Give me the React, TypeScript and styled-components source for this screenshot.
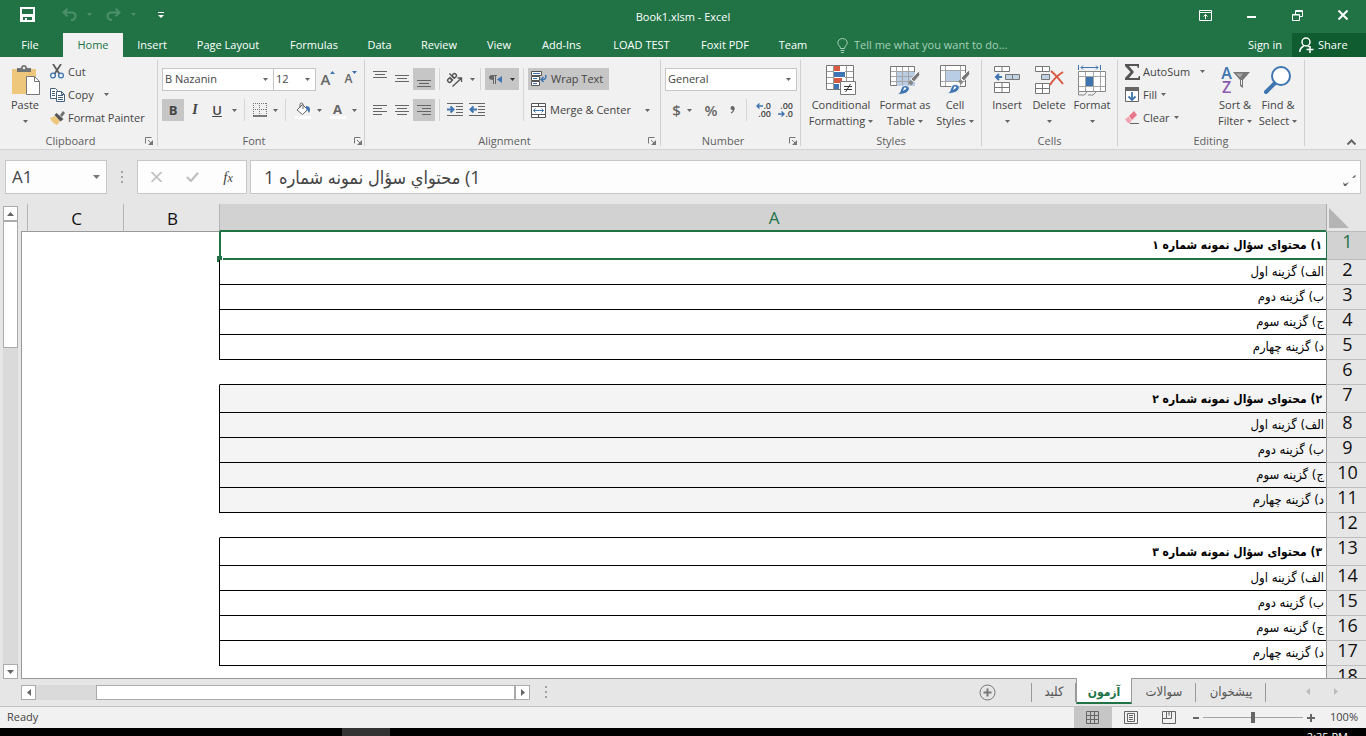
import React from "react";
import styled, { createGlobalStyle, css } from "styled-components";

const green = "#217346";
const darkGreen = "#0e5c2f";
const ink = "#444444";
const iconGrey = "#666666";
const blue = "#3e74b0";
const line = "#d2d2d2";
const uiFont = '"Open Sans", "Noto Sans", "DejaVu Sans", sans-serif';
const arabicFont = '"DejaVu Sans Condensed", "DejaVu Sans", "Noto Sans", sans-serif';

const GlobalStyle = createGlobalStyle`
  *, *::before, *::after { box-sizing: border-box; }
  body { margin: 0; font: 11px/16px ${uiFont}; color: ${ink}; background: #e6e6e6; }
  button, input, select { font: inherit; color: inherit; margin: 0; padding: 0; border: 0; border-radius: 0; background: none; }
  svg { display: block; flex: none; }
`;

const Window = styled.div`
  display: flex;
  flex-direction: column;
  height: 100vh;
  overflow: hidden;
`;

/* ---------- title bar ---------- */

const TitleBar = styled.header`
  display: grid;
  grid-template-columns: 1fr auto 1fr;
  align-items: stretch;
  flex: none;
  height: 33px;
  background: ${green};
  color: #ffffff;
`;

const QuickAccess = styled.div`
  display: flex;
  align-items: center;
  padding: 0 0 4px 18px;
`;

const QuickButton = styled.button<{ $w: number; $before?: number; $dim?: boolean }>`
  display: flex;
  align-items: center;
  justify-content: center;
  gap: 10px;
  width: ${(p) => p.$w}px;
  height: 22px;
  margin-left: ${(p) => p.$before ?? 0}px;
  color: ${(p) => (p.$dim ? "#4d8f6a" : "#ffffff")};
`;

const DocumentTitle = styled.h1`
  margin: 0;
  font-size: 11px;
  line-height: 33px;
  font-weight: 400;
`;

const WindowControls = styled.div`
  display: flex;
  justify-content: flex-end;
`;

const WindowButton = styled.button`
  display: flex;
  align-items: center;
  justify-content: center;
  width: 46px;
  padding-bottom: 3px;
  color: #ffffff;
`;

/* ---------- ribbon tabs ---------- */

const TabRow = styled.nav`
  display: flex;
  flex: none;
  height: 24px;
  background: ${green};
  color: #ffffff;
`;

const RibbonTab = styled.button<{ $w: number; $active?: boolean }>`
  width: ${(p) => p.$w}px;
  white-space: nowrap;
  ${(p) => p.$active && css`background: #f1f1f1; color: ${green};`}
`;

const TellMe = styled.label`
  display: flex;
  align-items: center;
  gap: 6px;
  padding-left: 15px;
  color: #a6d0b8;
`;

const TellMeInput = styled.input`
  width: 170px;
  &::placeholder { color: #a6d0b8; opacity: 1; }
`;

const Account = styled.div`
  display: flex;
  margin-left: auto;
`;

const SignIn = styled.button`
  padding: 0 10px;
`;

const Share = styled.button`
  display: flex;
  align-items: center;
  gap: 4px;
  width: 74px;
  padding-left: 7px;
  background: ${darkGreen};
`;

/* ---------- ribbon ---------- */

const RibbonBar = styled.section`
  display: flex;
  flex: none;
  height: 93px;
  background: #f1f1f1;
  border-bottom: 1px solid ${line};
`;

const GroupBox = styled.div<{ $w: number }>`
  display: grid;
  grid-template-rows: 76px 16px;
  flex: none;
  width: ${(p) => p.$w}px;
  border-right: 1px solid;
  border-image: linear-gradient(to bottom, transparent 4%, #d0d0d0 4%, #d0d0d0 96%, transparent 96%) 1;
`;

const GroupFoot = styled.div`
  display: flex;
  color: #5e5e5e;
`;

const GroupLabel = styled.span`
  flex: 1;
  text-align: center;
`;

const Launcher = styled.button`
  display: flex;
  align-items: center;
  justify-content: center;
  width: 16px;
`;

const LargeArea = styled.div<{ $left?: number }>`
  display: flex;
  align-items: flex-start;
  padding: 6px 0 0 ${(p) => p.$left ?? 4}px;
`;

const LargeButton = styled.button<{ $w: number }>`
  display: flex;
  flex-direction: column;
  align-items: center;
  width: ${(p) => p.$w}px;
  white-space: nowrap;
`;

const LargeIcon = styled.span`
  display: flex;
  align-items: center;
  justify-content: center;
  height: 34px;
`;

const LabelLine = styled.span`
  display: flex;
  align-items: center;
  justify-content: center;
  gap: 3px;
  height: 16px;
`;

const SmallColumn = styled.div<{ $w: number; $before?: number }>`
  display: flex;
  flex-direction: column;
  width: ${(p) => p.$w}px;
  margin: -3px 0 0 ${(p) => p.$before ?? 0}px;
`;

const SmallButton = styled.button`
  display: flex;
  align-items: center;
  gap: 4px;
  height: 23px;
  white-space: nowrap;
`;

const SmallIcon = styled.span`
  display: flex;
  justify-content: center;
  width: 14px;
`;

const FarArrow = styled.span`
  margin-left: 6px;
`;

const ControlArea = styled.div`
  display: flex;
  padding: 11px 4px 0;
`;

const Stack = styled.div`
  display: flex;
  flex-direction: column;
  gap: 9px;
`;

const ControlRow = styled.div`
  display: flex;
  align-items: center;
  height: 22px;
`;

const ToolButton = styled.button<{ $w?: number; $active?: boolean }>`
  display: flex;
  align-items: center;
  justify-content: center;
  gap: 6px;
  flex: none;
  width: ${(p) => p.$w ?? 22}px;
  height: 22px;
  white-space: nowrap;
  ${(p) => p.$active && css`background: #c6c6c6;`}
`;

const WideButton = styled(ToolButton)`
  justify-content: flex-start;
  gap: 4px;
  padding-left: 3px;
`;

const Divider = styled.span<{ $tall?: boolean }>`
  flex: none;
  width: 1px;
  height: ${(p) => (p.$tall ? 53 : 22)}px;
  margin: 0 4px;
  background: #d6d6d6;
`;

const SelectWrap = styled.span<{ $w: number }>`
  position: relative;
  flex: none;
  width: ${(p) => p.$w}px;
  height: 23px;
  background: #ffffff;
  border: 1px solid #c6c6c6;
  & + & { margin-left: -1px; }
  svg { position: absolute; right: 5px; top: 9px; pointer-events: none; }
`;

const Select = styled.select`
  appearance: none;
  width: 100%;
  height: 21px;
  padding-left: 2px;
  outline: 0;
`;

const Glyph = styled.span<{ $kind: "bold" | "italic" | "underline" }>`
  font-size: 13px;
  line-height: 18px;
  ${(p) => p.$kind === "bold" && css`font-weight: 700;`}
  ${(p) => p.$kind === "italic" && css`font: italic 700 14px/18px "Liberation Serif", serif;`}
  ${(p) => p.$kind === "underline" && css`font-weight: 600; text-decoration: underline;`}
`;

const Letter = styled.span<{ $size: number }>`
  font-size: ${(p) => p.$size}px;
  line-height: 20px;
  font-weight: 600;
  color: ${iconGrey};
`;

const LetterButton = styled(ToolButton)`
  gap: 0;
  svg { align-self: flex-start; margin-top: 3px; }
`;

const ColorLetter = styled.span`
  width: 16px;
  height: 17px;
  border-bottom: 3px solid #ffffff;
  font-size: 13px;
  line-height: 14px;
  font-weight: 700;
  color: ${iconGrey};
  text-align: center;
`;

const Decimals = styled.span`
  display: grid;
  grid-template-columns: auto auto;
  justify-content: end;
  align-items: center;
  width: 18px;
  font-size: 9px;
  line-height: 8px;
  font-weight: 600;
  text-align: right;
`;

const WholeLine = styled.span`
  grid-column: 1 / -1;
`;

const RibbonEnd = styled.div`
  display: flex;
  flex: 1;
  align-items: flex-end;
  justify-content: flex-end;
  padding: 0 10px 4px 0;
`;

const SortLetters = styled.span`
  display: flex;
  flex-direction: column;
  width: 12px;
  font-size: 16px;
  line-height: 14px;
  font-weight: 600;
  color: ${blue};
  span + span { color: #8a5bb0; }
`;

/* ---------- formula bar ---------- */

const FormulaRow = styled.section`
  display: flex;
  align-items: flex-start;
  flex: none;
  height: 54px;
  padding: 10px 5px 0;
`;

const FieldBox = styled.div`
  display: flex;
  align-items: center;
  height: 34px;
  background: #fdfdfd;
  border: 1px solid #c8c8c8;
`;

const NameBox = styled(FieldBox)`
  width: 102px;
  padding: 0 6px;
`;

const NameInput = styled.input`
  flex: 1;
  min-width: 0;
  font-size: 17px;
  line-height: 24px;
  outline: 0;
`;

const Grip = styled.span`
  display: flex;
  justify-content: center;
  align-items: center;
  width: 30px;
  height: 34px;
`;

const FormulaButtons = styled(FieldBox)`
  width: 110px;
  margin-right: 3px;
`;

const FormulaButton = styled.button`
  display: flex;
  align-items: center;
  justify-content: center;
  width: 36px;
  height: 32px;
  font: italic 15px/20px "Liberation Serif", serif;
  small { font-size: 12px; }
`;

const FormulaField = styled(FieldBox)`
  flex: 1;
  min-width: 0;
`;

const FormulaInput = styled.input`
  flex: 1;
  min-width: 0;
  padding-left: 13px;
  font: 18px/30px "Open Sans", ${arabicFont};
  text-align: left;
  outline: 0;
`;

const ExpandButton = styled.button`
  display: flex;
  align-items: flex-end;
  width: 17px;
  height: 20px;
`;

/* ---------- sheet ---------- */

const SheetArea = styled.main`
  display: flex;
  flex: 1;
  min-height: 0;
`;

const VerticalScroll = styled.div`
  display: flex;
  flex-direction: column;
  justify-content: space-between;
  flex: none;
  width: 15px;
  margin: 2px 3px 0;
  background: #dadada;
`;

const ScrollButton = styled.button`
  display: flex;
  align-items: center;
  justify-content: center;
  flex: none;
  width: 15px;
  height: 15px;
  background: #ffffff;
  border: 1px solid #ababab;
`;

const VerticalThumb = styled.div`
  height: 127px;
  background: #ffffff;
  border: 1px solid #ababab;
`;

const SheetView = styled.div`
  flex: 1;
  min-width: 0;
  overflow: hidden;
  border-bottom: 1px solid #999999;
`;

const Table = styled.table`
  width: 100%;
  table-layout: fixed;
  border-collapse: separate;
  border-spacing: 0;
  font-family: ${arabicFont};
  color: #000000;
  background: #ffffff;
`;

const HeadCell = styled.th<{ $active?: boolean }>`
  height: 28px;
  padding: 2px 0 0 2px;
  font: 400 17px/24px ${uiFont};
  color: ${(p) => (p.$active ? green : "#111111")};
  background: ${(p) => (p.$active ? "#d2d2d2" : "#e6e6e6")};
  border-bottom: ${(p) => (p.$active ? `2px solid ${green}` : "1px solid #999999")};
  border-left: 1px solid #b5b5b5;
  &:last-child { border-left: 0; }
`;

const CornerCell = styled.th`
  padding: 0 17px 3px 0;
  vertical-align: bottom;
  background: #e6e6e6;
  border-bottom: 1px solid #bbbbbb;
  border-left: 1px solid #ababab;
`;

const RowHead = styled.th<{ $active?: boolean }>`
  padding: 0 0 4px 2px;
  font: 400 18px/19px ${uiFont};
  vertical-align: top;
  color: ${(p) => (p.$active ? green : "#111111")};
  background: ${(p) => (p.$active ? "#d2d2d2" : "#e6e6e6")};
  border-bottom: 1px solid #bdbdbd;
  border-left: 1px solid #999999;
`;

type Kind = "title" | "option" | "blank";

const SheetRow = styled.tr<{ $kind: Kind }>`
  height: ${(p) => (p.$kind === "title" ? 28 : 25)}px;
`;

const MainCell = styled.td<{ $kind: Kind; $shade: boolean; $selected: boolean }>`
  position: relative;
  padding: 0 ${(p) => (p.$kind === "title" ? 4 : 2)}px 0 0;
  font-size: ${(p) => (p.$kind === "title" ? 12 : 13)}px;
  line-height: 20px;
  font-weight: ${(p) => (p.$kind === "title" ? 700 : 400)};
  text-align: right;
  white-space: nowrap;
  background: ${(p) => (p.$shade ? "#f4f4f4" : "#ffffff")};
  border-bottom: 1px solid #000000;
  border-left: 1px solid ${(p) => (p.$kind === "blank" ? "#ffffff" : "#000000")};
  ${(p) => p.$selected && css`
    border-bottom: 2px solid ${green};
    border-left: 2px solid ${green};
    box-shadow: 1px 0 0 ${green};
    &::after {
      content: "";
      position: absolute;
      left: -4px;
      bottom: -4px;
      width: 6px;
      height: 6px;
      background: ${green};
      border: 1px solid #ffffff;
      border-width: 0 1px 0 0;
    }
  `}
`;

const EmptyCell = styled.td`
  padding: 0;
  background: #ffffff;
  &:last-child { border-left: 1px solid #999999; }
`;

/* ---------- sheet tabs ---------- */

const BottomRow = styled.footer`
  display: flex;
  flex: none;
  height: 28px;
  padding-left: 21px;
  border-bottom: 1px solid #c3c3c3;
`;

const HorizontalScroll = styled.div`
  display: flex;
  width: 509px;
  height: 15px;
  margin-top: 6px;
  background: #dadada;
`;

const HorizontalThumb = styled.div`
  flex: 1;
  margin-left: 60px;
  background: #ffffff;
  border: 1px solid #ababab;
`;

const BottomGrip = styled.span`
  display: flex;
  align-items: center;
  width: 32px;
  padding: 0 0 1px 15px;
`;

const SheetTabs = styled.nav`
  display: flex;
  margin-left: auto;
`;

const AddSheet = styled.button`
  display: flex;
  padding: 5px 35px 0 0;
`;

const SheetTab = styled.button<{ $w: number; $active?: boolean }>`
  width: ${(p) => p.$w}px;
  height: 25px;
  font: 13px/20px ${arabicFont};
  color: #555555;
  ${(p) => p.$active
    ? css`
        margin: -1px 0 0;
        height: 26px;
        padding-top: 3px;
        background: #ffffff;
        font-size: 12px;
        font-weight: 700;
        color: ${green};
        border-bottom: 2px solid ${green};
        border-left: 1px solid #999999;
        border-right: 1px solid #999999;
      `
    : css`
        background: linear-gradient(#999999, #999999) right 4px / 1px 19px no-repeat;
        background-position: right 0 top 4px;
      `}
`;

const FirstRule = styled.span`
  width: 1px;
  height: 19px;
  margin-top: 4px;
  background: #999999;
`;

const TabNav = styled.div`
  display: flex;
  padding: 0 16px 3px 28px;
  button { display: flex; align-items: center; justify-content: center; width: 28px; }
`;

/* ---------- status bar ---------- */

const StatusBar = styled.div`
  display: flex;
  align-items: stretch;
  flex: none;
  height: 21px;
  padding: 0 8px 0 7px;
  line-height: 20px;
  background: #f1f1f1;
`;

const ViewButtons = styled.div`
  display: flex;
  margin-left: auto;
`;

const ViewButton = styled.button<{ $active?: boolean }>`
  display: flex;
  align-items: center;
  justify-content: center;
  width: 38px;
  background: ${(p) => (p.$active ? "#c6c6c6" : "transparent")};
`;

const ZoomStep = styled.button`
  display: flex;
  align-items: center;
  justify-content: center;
  width: 15px;
`;

const ZoomSlider = styled.input`
  appearance: none;
  width: 100px;
  height: 20px;
  background: linear-gradient(#a5a5a5, #a5a5a5) center / 100% 1px no-repeat;
  &::-webkit-slider-thumb { appearance: none; width: 4px; height: 11px; background: #666666; }
`;

const ZoomValue = styled.span`
  width: 40px;
  text-align: right;
`;

/* ---------- desktop taskbar ---------- */

const Taskbar = styled.div`
  display: flex;
  justify-content: space-between;
  flex: none;
  height: 8px;
  overflow: hidden;
  padding: 0 18px 0 342px;
  color: #ffffff;
  background: #000000;
`;

const TaskItem = styled.span`
  width: 48px;
  background: #333333;
`;

const Clock = styled.time`
  font-size: 11px;
  line-height: 18px;
`;

/* ---------- drawings ---------- */

const Arrow = ({ color = iconGrey }: { color?: string }) => (
  <svg width="5" height="3" viewBox="0 0 5 3"><path d="M0 0h5L2.500 3z" fill={color} /></svg>
);

const Dots = () => (
  <svg width="3" height="12" viewBox="0 0 3 12" fill="#a0a0a0"><path d="M0 0h2v2H0zM0 5h2v2H0zM0 10h2v2H0z" /></svg>
);

const SaveIcon = () => (
  <svg width="15" height="15" viewBox="0 0 15 15"><path fill="#fff" fillRule="evenodd" d="M0 0h15v15H0zM2 2v5h11V2zM3 10v3h2v-2h2v2h5v-3z" /></svg>
);

const UndoIcon = ({ flip }: { flip?: boolean }) => (
  <svg width="15" height="13" viewBox="0 0 15 13">
    <g transform={flip ? "translate(15 0) scale(-1 1)" : undefined} fill="none" stroke="currentColor" strokeWidth="2">
      <path d="M5.500 .8L1.500 4.500l4 3.700M2 4.500h7.500c3 0 4 1.500 4 3.500s-1.500 4-4.500 4" />
    </g>
  </svg>
);

const CustomizeIcon = () => (
  <svg width="6" height="6" viewBox="0 0 6 6" fill="#fff"><path d="M0 0h6v1H0zM0 3h6L3 6z" /></svg>
);

const LaunchIcon = () => (
  <svg width="8" height="8" viewBox="0 0 8 8" fill="none" stroke="#777"><path d="M.5 6.500v-6h6M3 3l3 3" /><path d="M8 3v5H3z" fill="#777" stroke="none" /></svg>
);

const PasteIcon = () => (
  <svg width="29" height="31" viewBox="0 0 29 31">
    <path d="M1 4h24v25H1z" fill="#eec67c" />
    <path d="M6 7V3h4c0-4 6-4 6 0h4v4z" fill="#737373" /><circle cx="13" cy="3" r="1.200" fill="#f1f1f1" />
    <path d="M15.500 11.500h8l5 5v13h-13z" fill="#fff" stroke="#777" /><path d="M23.500 11.500v5h5" fill="none" stroke="#777" />
  </svg>
);

const CutIcon = () => (
  <svg width="14" height="15" viewBox="0 0 14 15" fill="none">
    <path d="M3 0l6.500 10M11 0L4.500 10" stroke="#5c5c5c" strokeWidth="1.800" />
    <circle cx="3" cy="11.500" r="2.400" stroke={blue} strokeWidth="1.300" /><circle cx="11" cy="11.500" r="2.400" stroke={blue} strokeWidth="1.300" />
  </svg>
);

const CopyIcon = () => (
  <svg width="15" height="14" viewBox="0 0 15 14" fill="#fff" stroke="#44607f">
    <path d="M.5.500h5l2 2v8h-7zM2 3.500h3M2 5.500h3M2 7.500h3" /><path d="M6.500 3.500h5l3 3v7h-8zM8 7.500h5M8 9.500h5M8 11.500h5M11.500 3.500v3h3" />
  </svg>
);

const PainterIcon = () => (
  <svg width="15" height="14" viewBox="0 0 15 14">
    <path d="M0 7l5-2 5 5-3 4c-3-1-6-4-7-7z" fill="#eec67c" /><path d="M4.500 4l2-2 7 6-3 2.500z" fill="#555" /><path d="M10 4l3-4 2 2-3 4z" fill="#707070" />
  </svg>
);

const SizeMark = ({ down }: { down?: boolean }) => (
  <svg width="5" height="3" viewBox="0 0 5 3"><path d={down ? "M0 0h5L2.500 3z" : "M0 3h5L2.500 0z"} fill={blue} /></svg>
);

const BordersIcon = () => (
  <svg width="14" height="14" viewBox="0 0 14 14"><path d="M.5 0v13M13.500 0v13M6.500 0v13M0 .5h14M0 6.500h14" fill="none" stroke="#777" strokeDasharray="1 1" /><path d="M0 13h14" stroke="#555" strokeWidth="1.500" /></svg>
);

const FillIcon = () => (
  <svg width="16" height="17" viewBox="0 0 16 17"><path d="M2 8l5.500-5.500 5 5L7.500 12.500z" fill="#fff" stroke="#666" /><path d="M5 6V2.500a1.500 1.500 0 013 0V7" fill="none" stroke="#666" /><path d="M11 4c4 0 5 3 3 7-1-1-1-3-3-4z" fill={blue} /><path d="M0 14h16v3H0z" fill="#fff" /></svg>
);

const LinesIcon = ({ rows, y }: { rows: [number, number][]; y: number }) => (
  <svg width="14" height="16" viewBox="0 0 14 16" stroke="#666">
    {rows.map(([a, b], i) => <path key={i} d={`M${a} ${y + i * 3}H${b}`} />)}
  </svg>
);

const OrientationIcon = () => (
  <svg width="18" height="17" viewBox="0 0 18 17" fill="none" stroke="#555" strokeWidth="1.400">
    <g transform="translate(4 9) rotate(-45)"><circle cx="-.5" cy="0" r="2" /><path d="M1.800-2.500v5M4.200-5v7.500" /><circle cx="6.300" cy="0" r="2" /></g>
    <path d="M6.500 15.500L15 7.500M11.500 7h4v4" strokeWidth="1.300" />
  </svg>
);

const DirectionIcon = () => (
  <svg width="15" height="9" viewBox="0 0 15 9"><path d="M4 5C1 5 0 4 0 2.500S1 0 3 0h5v1H7v8H6V1H5v8H4z" fill="#666" /><path d="M13 1v7L8 4.500z" fill={blue} /></svg>
);

const IndentIcon = ({ out }: { out?: boolean }) => (
  <svg width="17" height="14" viewBox="0 0 17 14" fill="none">
    <path d="M0 .5h16M9 3.500h7M9 6.500h7M9 9.500h7M0 12.500h16" stroke="#666" />
    <path d={out ? "M8 6.500H1.500M4.500 3.500l-3 3 3 3" : "M0 6.500h6.500M3.500 3.500l3 3-3 3"} stroke={blue} strokeWidth="2" />
  </svg>
);

const WrapIcon = () => (
  <svg width="16" height="16" viewBox="0 0 16 16" fill="#fff" stroke="#555"><path d="M.5.500h10v4H.5zM.5 5.500h8v4h-8zM.5 10.500h8v4h-8z" /><path d="M2 2.500h7M2 7.500h4M2 12.500h4" stroke={blue} /><path d="M14.500 4c1 2 0 4.500-2 4.500h-2M12.500 6L10 8.500l2.500 2.500" fill="none" stroke={blue} strokeWidth="1.500" /></svg>
);

const MergeIcon = () => (
  <svg width="15" height="15" viewBox="0 0 15 15" fill="#fff" stroke="#555"><path d="M.5.500h14v14H.5zM.5 3.500h14M.5 11.500h14M7.500.500v3M7.500 11.500v3" /><path d="M2.500 7.500h10M4.500 5.500l-2 2 2 2M10.500 5.500l2 2-2 2" fill="none" stroke={blue} /></svg>
);

const DecimalMark = ({ right }: { right?: boolean }) => (
  <svg width="7" height="6" viewBox="0 0 7 6"><path d={right ? "M0 3h6M3.500 .5L6 3 3.500 5.500" : "M7 3H1M3.500 .5L1 3l2.500 2.500"} fill="none" stroke={blue} strokeWidth="1.400" /></svg>
);

const ConditionalIcon = () => (
  <svg width="30" height="31" viewBox="0 0 30 31"><path d="M.5.500h27v24H.5z" fill="#fff" stroke="#777" /><path d="M8 1h6v5H8zM8 13h8v5H8z" fill="#d85a42" /><path d="M8 7h11v5H8zM8 19h5v5H8z" fill="#3f75b5" /><path d="M7.500.500v24M20.500.500v18M1 6.500h7M19 6.500h8M1 12.500h7M19 12.500h8M1 18.500h7" fill="none" stroke="#999" /><path d="M14.500 16.500h15v13h-15z" fill="#fff" stroke="#777" /><path d="M18 21.500h8M18 24.500h8M24.500 19l-5 8" stroke="#333" /></svg>
);

const Brush = () => (
  <g>
    <path d="M29 5l1 4-6 7-3-3z" fill="#777" stroke="#f1f1f1" />
    <path d="M20.500 14l3 3-2.500 2.500-3-3z" fill="#888" />
    <path d="M7 28c4-1 3-4 5-7 2-3 9-1 7 3-2 4-8 5-12 4z" fill={blue} stroke="#f1f1f1" />
    <path d="M14 22c1-1 3 0 2 1l-3 2z" fill="#fff" />
  </g>
);

const FormatTableIcon = () => (
  <svg width="31" height="29" viewBox="0 0 31 29"><path d="M.5.500h24v19H.5z" fill="#fff" stroke="#777" /><path d="M7 6h18v14H7z" fill="#b9cde4" /><path d="M6.500 1v18M12.500 1v18M18.500 1v18M1 5.500h23M1 10.500h23M1 15.500h23" stroke="#a5a5a5" /><Brush /></svg>
);

const CellStylesIcon = () => (
  <svg width="31" height="31" viewBox="0 0 31 31"><path d="M.5.500h25v21H.5z" fill="#fff" stroke="#777" /><path d="M6 6h14v10H6z" fill="#b9cde4" /><path d="M5.500 1v20M20.500 1v20M1 5.500h24M1 16.500h24" stroke="#a5a5a5" /><Brush /></svg>
);

const InsertCellsIcon = () => (
  <svg width="27" height="28" viewBox="0 0 27 28" fill="#fff" stroke="#777"><path d="M.5.500h15v5H.5zM8 .5v5M.5 16.500h15v10H.5zM8 16.500v10M.5 21.500h15" /><path d="M11.500 8.500h14v5h-14zM18.500 8.500v5" fill="#c3d2e3" /><path d="M8 11H2M5 8l-3 3 3 3" fill="none" stroke={blue} strokeWidth="2" /></svg>
);

const DeleteCellsIcon = () => (
  <svg width="29" height="28" viewBox="0 0 29 28" fill="#fff" stroke="#777"><path d="M.5.500h14v5H.5zM7.500.500v5M.5 17.500h14v10H.5zM7.500 17.500v10M.5 22.500h14" /><path d="M6.500 8.500h8v5h-8z" fill="#c3d2e3" /><path d="M16 5c4 3 8 8 12 13M28 6c-5 3-10 8-13 13" fill="none" stroke="#d85a42" strokeWidth="2" /></svg>
);

const FormatCellsIcon = () => (
  <svg width="29" height="31" viewBox="0 0 29 31" fill="#fff"><path d="M.5 27v3h6l3-4M10 30h5l4-4" fill="none" stroke="#888" /><path d="M.5 6.500h27v20H.5z" stroke="#888" /><path d="M7.500 7v19M15.500 7v19M22.500 7v19M1 11.500h26M1 21.500h26" stroke="#a5a5a5" /><path d="M8 12h7v9H8z" fill={blue} /><path d="M.5 0v5M22.500 0v5M3 2.500h17M5 .5l-2 2 2 2M18 .5l2 2-2 2" fill="none" stroke={blue} /></svg>
);

const SumIcon = () => (
  <svg width="15" height="16" viewBox="0 0 15 16"><path d="M0 0h14v4h-1l-1-2H4l5 6-5 6h9l1-2h1v4H0v-2l5.500-6L0 2z" fill="#555" /></svg>
);

const FillDownIcon = () => (
  <svg width="14" height="15" viewBox="0 0 14 15"><path d="M.5.500h13v14H.5z" fill="#fff" stroke="#666" /><path d="M0 0h14v4H0z" fill="#666" /><path d="M7 5v8M3.500 9.500L7 13l3.500-3.500" fill="none" stroke={blue} strokeWidth="1.800" /></svg>
);

const ClearIcon = () => (
  <svg width="14" height="13" viewBox="0 0 14 13"><path d="M4 5l5-5 3 4-5 5z" fill="#e8778a" /><path d="M0 8.500L3.500 5.500 6.500 9.500 5 12H3z" fill="#f0a3b0" /><path d="M5 12.500h9" stroke="#666" /></svg>
);

const FunnelIcon = () => (
  <svg width="17" height="16" viewBox="0 0 17 16"><path d="M0 0h17l-7 8v8l-3-2V8z" fill="#777" /><path d="M3 1.500h7l-3 4z" fill="#aaa" /><path d="M8.500 8v5" stroke="#f1f1f1" /></svg>
);

const FindIcon = () => (
  <svg width="28" height="28" viewBox="0 0 28 28"><path d="M2 26l9-9" stroke={blue} strokeWidth="4" strokeLinecap="round" /><circle cx="17" cy="10" r="9" fill="#fff" stroke={blue} strokeWidth="2" /></svg>
);

/* ---------- building blocks ---------- */

const RibbonGroup = ({ label, width, launcher, children }: { label: string; width: number; launcher?: boolean; children: React.ReactNode }) => (
  <GroupBox $w={width} role="group" aria-label={label}>
    {children}
    <GroupFoot>
      <GroupLabel>{label}</GroupLabel>
      {launcher && <Launcher aria-label={`${label} settings`}><LaunchIcon /></Launcher>}
    </GroupFoot>
  </GroupBox>
);

const Large = ({ icon, width, first, second }: { icon: React.ReactNode; width: number; first: string; second?: string }) => (
  <LargeButton $w={width}>
    <LargeIcon>{icon}</LargeIcon>
    <LabelLine>{first}</LabelLine>
    <LabelLine>{second}<Arrow /></LabelLine>
  </LargeButton>
);

const Small = ({ icon, label, arrow }: { icon: React.ReactNode; label: string; arrow?: "near" | "far" }) => (
  <SmallButton>
    <SmallIcon>{icon}</SmallIcon>
    {label}
    {arrow === "near" && <Arrow />}
    {arrow === "far" && <FarArrow><Arrow /></FarArrow>}
  </SmallButton>
);

const Picker = ({ label, width, value }: { label: string; width: number; value: string }) => (
  <SelectWrap $w={width}>
    <Select aria-label={label} defaultValue={value}><option>{value}</option></Select>
    <Arrow />
  </SelectWrap>
);

const ribbonTabs: [string, number][] = [
  ["Home", 60], ["Insert", 58], ["Page Layout", 94], ["Formulas", 78], ["Data", 53], ["Review", 66],
  ["View", 54], ["Add-Ins", 71], ["LOAD TEST", 89], ["Foxit PDF", 78], ["Team", 58],
];

const options = ["الف) گزینه اول", "ب) گزینه دوم", "ج) گزینه سوم", "د) گزینه چهارم"];

const rows: { text: string; kind: Kind; shade: boolean }[] = ["۱", "۲", "۳"].flatMap((n, i) => [
  { text: `${n}) محتوای سؤال نمونه شماره ${n}`, kind: "title" as Kind, shade: i === 1 },
  ...options.map((text) => ({ text, kind: "option" as Kind, shade: i === 1 })),
  { text: "", kind: "blank" as Kind, shade: false },
]);

export default function App() {
  return (
    <Window>
      <GlobalStyle />
      <TitleBar>
        <QuickAccess>
          <QuickButton $w={18} aria-label="Save"><SaveIcon /></QuickButton>
          <QuickButton $w={30} $before={26} $dim aria-label="Undo"><UndoIcon /><Arrow color="#4d8f6a" /></QuickButton>
          <QuickButton $w={30} $before={14} $dim aria-label="Redo"><UndoIcon flip /><Arrow color="#4d8f6a" /></QuickButton>
          <QuickButton $w={22} $before={14} aria-label="Customize toolbar"><CustomizeIcon /></QuickButton>
        </QuickAccess>
        <DocumentTitle>Book1.xlsm - Excel</DocumentTitle>
        <WindowControls>
          <WindowButton aria-label="Ribbon display options">
            <svg width="13" height="11" viewBox="0 0 13 11" fill="none" stroke="#fff"><path d="M.5.500h12v10H.5zM.5 2.500h12M6.500 9V4.500M4.500 6.500l2-2 2 2" /></svg>
          </WindowButton>
          <WindowButton aria-label="Minimize">
            <svg width="9" height="8" viewBox="0 0 9 8"><path d="M0 5h9v2H0z" fill="#fff" /></svg>
          </WindowButton>
          <WindowButton aria-label="Restore">
            <svg width="11" height="11" viewBox="0 0 11 11" fill="none" stroke="#fff"><path d="M.5 4.500h7v6h-7zM.5 5h7M3.500 4V.5h7v6h-3M3.500 1.500h7" /></svg>
          </WindowButton>
          <WindowButton aria-label="Close">
            <svg width="10" height="10" viewBox="0 0 10 10"><path d="M.5.500l9 9M9.500.500l-9 9" stroke="#fff" strokeWidth="2" /></svg>
          </WindowButton>
        </WindowControls>
      </TitleBar>

      <TabRow>
        <RibbonTab $w={63}>File&nbsp;</RibbonTab>
        {ribbonTabs.map(([name, w]) => <RibbonTab key={name} $w={w} $active={name === "Home"}>{name}</RibbonTab>)}
        <TellMe>
          <svg width="11" height="15" viewBox="0 0 11 15" fill="none" stroke="#a6d0b8"><path d="M3.500 10.500C3.500 8 .8 7.500.8 4.800a4.700 4.300 0 019.400 0C10.200 7.500 7.500 8 7.500 10.500zM3.500 12.500h4M4 14.500h3" /></svg>
          <TellMeInput aria-label="Tell me what you want to do" placeholder="Tell me what you want to do..." />
        </TellMe>
        <Account>
          <SignIn>Sign in</SignIn>
          <Share>
            <svg width="15" height="16" viewBox="0 0 15 16" fill="none" stroke="#fff" strokeWidth="1.500"><circle cx="7" cy="5" r="4" /><path d="M.8 15c0-3 2-5 4-6M9 9l1.500 1M7.500 12.500h7M11 9v7" /></svg>
            Share
          </Share>
        </Account>
      </TabRow>

      <RibbonBar>
        <RibbonGroup label="Clipboard" width={158} launcher>
          <LargeArea>
            <Large icon={<PasteIcon />} width={42} first="Paste" />
            <SmallColumn $w={102} $before={4}>
              <Small icon={<CutIcon />} label="Cut" />
              <Small icon={<CopyIcon />} label="Copy" arrow="far" />
              <Small icon={<PainterIcon />} label="Format Painter" />
            </SmallColumn>
          </LargeArea>
        </RibbonGroup>

        <RibbonGroup label="Font" width={207} launcher>
          <ControlArea>
            <Stack>
              <ControlRow>
                <Picker label="Font" width={112} value="B Nazanin" />
                <Picker label="Font size" width={43} value="12" />
                <LetterButton $w={24} aria-label="Increase font size"><Letter $size={15}>A</Letter><SizeMark /></LetterButton>
                <LetterButton aria-label="Decrease font size"><Letter $size={12}>A</Letter><SizeMark down /></LetterButton>
              </ControlRow>
              <ControlRow>
                <ToolButton $active aria-label="Bold"><Glyph $kind="bold">B</Glyph></ToolButton>
                <ToolButton aria-label="Italic"><Glyph $kind="italic">I</Glyph></ToolButton>
                <ToolButton aria-label="Underline"><Glyph $kind="underline">U</Glyph></ToolButton>
                <ToolButton $w={12} aria-label="Underline styles"><Arrow /></ToolButton>
                <Divider />
                <ToolButton $w={32} aria-label="Borders"><BordersIcon /><Arrow /></ToolButton>
                <Divider />
                <ToolButton $w={36} aria-label="Fill color"><FillIcon /><Arrow /></ToolButton>
                <ToolButton $w={34} aria-label="Font color"><ColorLetter>A</ColorLetter><Arrow /></ToolButton>
              </ControlRow>
            </Stack>
          </ControlArea>
        </RibbonGroup>

        <RibbonGroup label="Alignment" width={296} launcher>
          <ControlArea>
            <Stack>
              <ControlRow>
                <ToolButton aria-label="Top align"><LinesIcon y={0.5} rows={[[0, 14], [2, 12], [0, 14]]} /></ToolButton>
                <ToolButton aria-label="Middle align"><LinesIcon y={4.5} rows={[[0, 14], [2, 12], [0, 14]]} /></ToolButton>
                <ToolButton $active aria-label="Bottom align"><LinesIcon y={9.5} rows={[[0, 14], [2, 12], [0, 14]]} /></ToolButton>
                <Divider />
                <ToolButton $w={32} aria-label="Orientation"><OrientationIcon /><Arrow /></ToolButton>
                <Divider />
                <ToolButton $w={34} $active aria-label="Text direction"><DirectionIcon /><Arrow color="#333" /></ToolButton>
              </ControlRow>
              <ControlRow>
                <ToolButton aria-label="Align left"><LinesIcon y={3.5} rows={[[0, 14], [0, 9], [0, 14], [0, 9]]} /></ToolButton>
                <ToolButton aria-label="Center"><LinesIcon y={3.5} rows={[[0, 14], [2, 12], [0, 14], [2, 12]]} /></ToolButton>
                <ToolButton $active aria-label="Align right"><LinesIcon y={3.5} rows={[[0, 14], [5, 14], [0, 14], [5, 14]]} /></ToolButton>
                <Divider />
                <ToolButton aria-label="Decrease indent"><IndentIcon /></ToolButton>
                <ToolButton aria-label="Increase indent"><IndentIcon out /></ToolButton>
              </ControlRow>
            </Stack>
            <Divider $tall />
            <Stack>
              <WideButton $w={81} $active><WrapIcon />Wrap Text</WideButton>
              <ControlRow>
                <WideButton $w={112}><MergeIcon />Merge &amp; Center</WideButton>
                <ToolButton $w={14} aria-label="Merge options"><Arrow /></ToolButton>
              </ControlRow>
            </Stack>
          </ControlArea>
        </RibbonGroup>

        <RibbonGroup label="Number" width={140} launcher>
          <ControlArea>
            <Stack>
              <ControlRow><Picker label="Number format" width={132} value="General" /></ControlRow>
              <ControlRow>
                <ToolButton $w={34} aria-label="Accounting format"><Letter $size={15}>$</Letter><Arrow /></ToolButton>
                <ToolButton $w={24} aria-label="Percent style"><Letter $size={15}>%</Letter></ToolButton>
                <ToolButton $w={19} aria-label="Comma style">
                  <svg width="5" height="8" viewBox="0 0 5 8"><circle cx="2.500" cy="2" r="2" fill="#666" /><path d="M4 2c0 2-1 4-3 5" fill="none" stroke="#666" strokeWidth="1.300" /></svg>
                </ToolButton>
                <Divider />
                <ToolButton aria-label="Increase decimal"><Decimals><DecimalMark /><span>.0</span><WholeLine>.00</WholeLine></Decimals></ToolButton>
                <ToolButton aria-label="Decrease decimal"><Decimals><WholeLine>.00</WholeLine><DecimalMark right /><span>.0</span></Decimals></ToolButton>
              </ControlRow>
            </Stack>
          </ControlArea>
        </RibbonGroup>

        <RibbonGroup label="Styles" width={181}>
          <LargeArea>
            <Large icon={<ConditionalIcon />} width={72} first="Conditional" second="Formatting" />
            <Large icon={<FormatTableIcon />} width={56} first="Format as" second="Table" />
            <Large icon={<CellStylesIcon />} width={44} first="Cell" second="Styles" />
          </LargeArea>
        </RibbonGroup>

        <RibbonGroup label="Cells" width={136}>
          <LargeArea>
            <Large icon={<InsertCellsIcon />} width={42} first="Insert" />
            <Large icon={<DeleteCellsIcon />} width={42} first="Delete" />
            <Large icon={<FormatCellsIcon />} width={44} first="Format" />
          </LargeArea>
        </RibbonGroup>

        <RibbonGroup label="Editing" width={187}>
          <LargeArea $left={7}>
            <SmallColumn $w={89}>
              <Small icon={<SumIcon />} label="AutoSum" arrow="far" />
              <Small icon={<FillDownIcon />} label="Fill" arrow="near" />
              <Small icon={<ClearIcon />} label="Clear" arrow="near" />
            </SmallColumn>
            <LargeButton $w={42}>
              <LargeIcon><SortLetters><span>A</span><span>Z</span></SortLetters><FunnelIcon /></LargeIcon>
              <LabelLine>Sort &amp;</LabelLine>
              <LabelLine>Filter<Arrow /></LabelLine>
            </LargeButton>
            <Large icon={<FindIcon />} width={44} first="Find &amp;" second="Select" />
          </LargeArea>
        </RibbonGroup>
        <RibbonEnd>
          <button aria-label="Collapse ribbon"><svg width="9" height="6" viewBox="0 0 9 6" fill="none" stroke="#666" strokeWidth="2"><path d="M.5 5.500l4-4 4 4" /></svg></button>
        </RibbonEnd>
      </RibbonBar>

      <FormulaRow>
        <NameBox><NameInput aria-label="Name box" defaultValue="A1" /><svg width="7" height="4" viewBox="0 0 7 4"><path d="M0 0h7L3.500 4z" fill="#777" /></svg></NameBox>
        <Grip><Dots /></Grip>
        <FormulaButtons>
          <FormulaButton aria-label="Cancel"><svg width="11" height="10" viewBox="0 0 11 10"><path d="M.5 0l10 10M10.500 0l-10 10" stroke="#c0c0c0" strokeWidth="1.600" /></svg></FormulaButton>
          <FormulaButton aria-label="Enter"><svg width="13" height="10" viewBox="0 0 13 10"><path d="M1 5l4 4L12 .8" fill="none" stroke="#c0c0c0" strokeWidth="2.200" /></svg></FormulaButton>
          <FormulaButton aria-label="Insert function"><span>f<small>x</small></span></FormulaButton>
        </FormulaButtons>
        <FormulaField>
          <FormulaInput dir="rtl" aria-label="Formula" defaultValue="1) محتواي سؤال نمونه شماره 1" />
          <ExpandButton aria-label="Expand formula bar"><svg width="13" height="13" viewBox="0 0 13 13" fill="#666"><path d="M0 8l2 2 4-2-3 4H1zM9 4l3-3 1 1-2 2z" /></svg></ExpandButton>
        </FormulaField>
      </FormulaRow>

      <SheetArea>
        <VerticalScroll>
          <div>
            <ScrollButton aria-label="Scroll up"><svg width="7" height="4" viewBox="0 0 7 4"><path d="M0 4h7L3.500 0z" fill="#666" /></svg></ScrollButton>
            <VerticalThumb />
          </div>
          <ScrollButton aria-label="Scroll down"><svg width="7" height="4" viewBox="0 0 7 4"><path d="M0 0h7L3.500 4z" fill="#666" /></svg></ScrollButton>
        </VerticalScroll>
        <SheetView>
          <Table dir="rtl">
            <colgroup><col width="40" /><col /><col width="96" /><col width="96" /><col width="6" /></colgroup>
            <thead>
              <tr>
                <CornerCell aria-label="Select all"><svg width="20" height="20" viewBox="0 0 20 20"><path d="M0 0v20h20z" fill="#b4b4b4" /></svg></CornerCell>
                <HeadCell $active scope="col">A</HeadCell>
                <HeadCell scope="col">B</HeadCell>
                <HeadCell scope="col">C</HeadCell>
                <HeadCell as="td" />
              </tr>
            </thead>
            <tbody>
              {rows.map((row, i) => (
                <SheetRow key={i} $kind={row.kind}>
                  <RowHead scope="row" $active={i === 0}>{i + 1}</RowHead>
                  <MainCell $kind={row.kind} $shade={row.shade} $selected={i === 0}>{row.text}</MainCell>
                  <EmptyCell /><EmptyCell /><EmptyCell />
                </SheetRow>
              ))}
            </tbody>
          </Table>
        </SheetView>
      </SheetArea>

      <BottomRow>
        <HorizontalScroll>
          <ScrollButton aria-label="Scroll left"><svg width="4" height="7" viewBox="0 0 4 7"><path d="M4 0v7L0 3.500z" fill="#666" /></svg></ScrollButton>
          <HorizontalThumb />
          <ScrollButton aria-label="Scroll right"><svg width="4" height="7" viewBox="0 0 4 7"><path d="M0 0v7l4-3.500z" fill="#666" /></svg></ScrollButton>
        </HorizontalScroll>
        <BottomGrip><Dots /></BottomGrip>
        <SheetTabs>
          <AddSheet aria-label="New sheet"><svg width="17" height="17" viewBox="0 0 17 17" fill="none" stroke="#777"><circle cx="8.500" cy="8.500" r="7.500" /><path d="M4.500 8.500h8M8.500 4.500v8" strokeWidth="2" /></svg></AddSheet>
          <FirstRule />
          <SheetTab $w={44}>کلید</SheetTab>
          <SheetTab $w={56} $active>آزمون</SheetTab>
          <SheetTab $w={64}>سوالات</SheetTab>
          <SheetTab $w={70}>پیشخوان</SheetTab>
        </SheetTabs>
        <TabNav>
          <button aria-label="Previous sheets"><svg width="4" height="7" viewBox="0 0 4 7"><path d="M4 0v7L0 3.500z" fill="#bbb" /></svg></button>
          <button aria-label="Next sheets"><svg width="4" height="7" viewBox="0 0 4 7"><path d="M0 0v7l4-3.500z" fill="#bbb" /></svg></button>
        </TabNav>
      </BottomRow>

      <StatusBar>
        <span>Ready</span>
        <ViewButtons>
          <ViewButton $active aria-label="Normal view"><svg width="14" height="13" viewBox="0 0 14 13" fill="none" stroke="#666"><path d="M.5.500h12v12H.5zM4.500.500v12M8.500.500v12M.5 4.500h12M.5 8.500h12" /></svg></ViewButton>
          <ViewButton aria-label="Page layout view"><svg width="14" height="13" viewBox="0 0 14 13" fill="none" stroke="#666"><path d="M.5.500h13v12H.5zM3.500 2.500h7v8h-7zM5 4.500h4M5 6.500h4M5 8.500h4" /></svg></ViewButton>
          <ViewButton aria-label="Page break view"><svg width="14" height="13" viewBox="0 0 14 13" fill="none" stroke="#666"><path d="M.5.500h13v12H.5zM4.500.500v7h5v-7M.5 7.500h4M7 .5v4" /></svg></ViewButton>
        </ViewButtons>
        <ZoomStep aria-label="Zoom out"><svg width="6" height="2" viewBox="0 0 6 2"><path d="M0 0h6v2H0z" fill="#666" /></svg></ZoomStep>
        <ZoomSlider type="range" min={0} max={100} defaultValue={50} aria-label="Zoom" />
        <ZoomStep aria-label="Zoom in"><svg width="8" height="8" viewBox="0 0 8 8"><path d="M0 3h8v2H0zM3 0h2v8H3z" fill="#666" /></svg></ZoomStep>
        <ZoomValue>100%</ZoomValue>
      </StatusBar>

      <Taskbar>
        <TaskItem />
        <Clock>2:35 PM</Clock>
      </Taskbar>
    </Window>
  );
}
